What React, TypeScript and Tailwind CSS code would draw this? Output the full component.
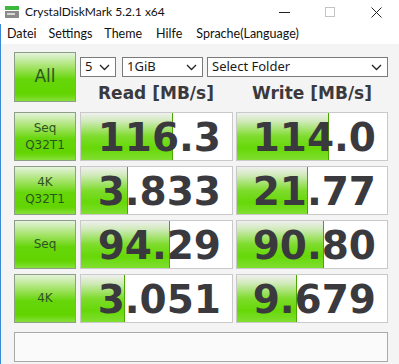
import React from "react";

const rows = [
    { label: ["Seq", "Q32T1"], read: "116.3", readPct: 61, write: "114.0", writePct: 61 },
    { label: ["4K", "Q32T1"], read: "3.833", readPct: 31, write: "21.77", writePct: 47 },
    { label: ["Seq"], read: "94.29", readPct: 59, write: "90.80", writePct: 58 },
    { label: ["4K"], read: "3.051", readPct: 29, write: "9.679", writePct: 40 },
];

function GreenButton({ children, className }: { children: React.ReactNode; className?: string }) {
    return (
        <div className={"flex flex-col items-center justify-center border border-[#8d9e86] bg-[linear-gradient(to_bottom,#e4f3dc_0%,#a8e46e_28%,#66d60a_55%,#62d400_85%,#86e03a_100%)] text-[#2c5520] " + (className ?? "")}>
            {children}
        </div>
    );
}

function Meter({ value, pct, w }: { value: string; pct: number; w: string }) {
    return (
        <div className={"relative h-full border border-[#c9c9c9] bg-white " + w}>
            <div
                className="absolute left-0 top-0 bottom-0 border-r border-[#4aa800] bg-[linear-gradient(to_bottom,#f0f0f0_0%,#cfeab8_18%,#7edc2c_50%,#66d808_75%,#80de30_100%)]"
                style={{ width: pct + "%" }}
            />
            <div className="relative flex h-full items-center justify-end pr-[11px] pt-[1px] font-['DejaVu_Sans',sans-serif] text-[39px] font-bold leading-none text-[#3a3a3e]">
                {value}
            </div>
        </div>
    );
}

function Select({ text, w }: { text: string; w: string }) {
    return (
        <div className={"flex h-[20px] items-center justify-between border border-[#7a7a7a] bg-white pl-[4px] pr-[5px] text-[13px] text-[#1a1a1a] " + w}>
            <span>{text}</span>
            <svg width="11" height="7" viewBox="0 0 11 7"><path d="M1 1l4.5 4.5L10 1" fill="none" stroke="#222" strokeWidth="1.3" /></svg>
        </div>
    );
}

export default function App() {
    return (
        <div className="flex h-[364px] w-[399px] flex-col overflow-hidden bg-white font-['Lato','Noto_Sans',sans-serif]">
            {/* title bar */}
            <div className="flex h-[24px] items-center bg-white">
                <svg className="ml-[5px]" width="14" height="12" viewBox="0 0 14 12">
                    <rect x="0" y="0" width="14" height="4" fill="#3cb83c" />
                    <rect x="0" y="5" width="14" height="7" fill="#8a8a8a" />
                    <rect x="2" y="7" width="8" height="2" fill="#d8d8d8" />
                </svg>
                <span className="ml-[6px] text-[12px] text-[#111]">CrystalDiskMark 5.2.1 x64</span>
                <div className="ml-auto flex items-center">
                    <div className="flex w-[46px] justify-center"><div className="h-px w-[11px] bg-[#222]" /></div>
                    <div className="flex w-[46px] justify-center"><div className="h-[10px] w-[10px] border border-[#c4c4c4]" /></div>
                    <div className="flex w-[46px] justify-center">
                        <svg width="11" height="11" viewBox="0 0 11 11"><path d="M0.5 0.5l10 10M10.5 0.5l-10 10" stroke="#222" strokeWidth="1" /></svg>
                    </div>
                </div>
            </div>
            <div className="flex flex-1 flex-col border-l border-[#3b8ad6]">
                {/* menu */}
                <div className="flex h-[20px] items-center bg-white pl-[6px] text-[12.5px] text-[#111]">
                    <span>Datei</span>
                    <span className="ml-[12px]">Settings</span>
                    <span className="ml-[12px]">Theme</span>
                    <span className="ml-[14px]">Hilfe</span>
                    <span className="ml-[14px]">Sprache(Language)</span>
                </div>
                {/* main */}
                <div className="flex flex-1 flex-col bg-[#f4f4f4] pl-[13px] pt-[8px]">
                    <div className="flex">
                        <GreenButton className="h-[50px] w-[62px] font-['DejaVu_Sans',sans-serif] text-[17px]">All</GreenButton>
                        <div className="ml-[4px] flex flex-col">
                            <div className="mt-[5px] flex font-['Noto_Sans',sans-serif]">
                                <Select text="5" w="w-[36px]" />
                                <Select text="1GiB" w="ml-[6px] w-[81px]" />
                                <Select text="Select Folder" w="ml-[4px] w-[181px]" />
                            </div>
                            <div className="flex h-[30px] items-center pt-[3px] font-['DejaVu_Sans',sans-serif] text-[17px] font-bold text-[#3a3a3e]">
                                <div className="w-[152px] text-center">Read [MB/s]</div>
                                <div className="ml-[4px] w-[152px] text-center">Write [MB/s]</div>
                            </div>
                        </div>
                    </div>
                    <div className="mt-[5px] flex flex-col gap-[5px]">
                        {rows.map((r, i) => (
                            <div key={i} className="flex h-[49px]">
                                <GreenButton className="w-[62px] font-['DejaVu_Sans',sans-serif] text-[12px] leading-[17px]">
                                    {r.label.map((l) => <span key={l}>{l}</span>)}
                                </GreenButton>
                                <div className="ml-[4px] flex h-full">
                                    <Meter value={r.read} pct={r.readPct} w="w-[153px]" />
                                </div>
                                <div className="ml-[3px] flex h-full">
                                    <Meter value={r.write} pct={r.writePct} w="w-[152px]" />
                                </div>
                            </div>
                        ))}
                    </div>
                    <div className="mt-[9px] h-[30px] w-[374px] border border-[#a9a9a9] bg-[#fafafa]" />
                </div>
            </div>
        </div>
    );
}
